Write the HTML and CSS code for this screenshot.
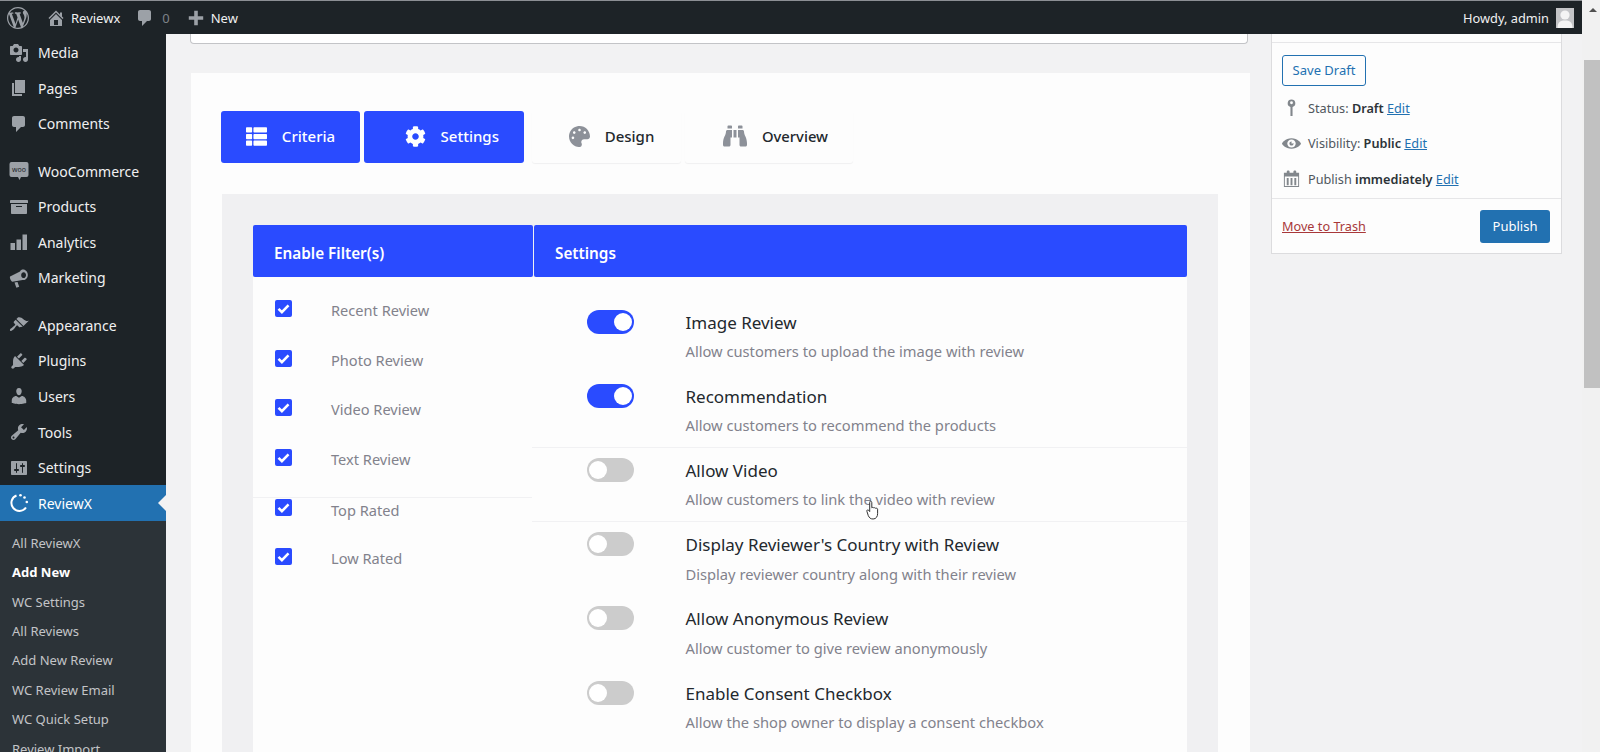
FILE: index.html
```html
<!DOCTYPE html>
<html lang="en">
<head>
<meta charset="utf-8">
<title>Add New ReviewX</title>
<link rel="stylesheet" href="styles.css">
</head>
<body>
<div class="page">
  <header class="adminbar">
    <svg class="ab-wp" viewBox="0 0 20 20"><path d="M20 10c0-5.51-4.49-10-10-10C4.48 0 0 4.49 0 10c0 5.52 4.48 10 10 10 5.51 0 10-4.48 10-10zM7.78 15.37L4.37 6.22c.55-.02 1.17-.08 1.17-.08.5-.06.44-1.13-.06-1.11 0 0-1.45.11-2.37.11-.18 0-.37 0-.58-.01C4.12 2.69 6.87 1.11 10 1.11c2.33 0 4.45.87 6.05 2.34-.68-.11-1.65.39-1.65 1.58 0 .74.45 1.36.9 2.1.35.61.55 1.36.55 2.46 0 1.49-1.4 5-1.4 5l-3.03-8.37c.54-.02.82-.17.82-.17.5-.05.44-1.25-.06-1.22 0 0-1.44.12-2.38.12-.87 0-2.33-.12-2.33-.12-.5-.03-.56 1.2-.06 1.22l.92.08 1.26 3.41zM17.41 10c.24-.64.74-1.87.43-4.25.7 1.29 1.05 2.71 1.05 4.25 0 3.29-1.73 6.24-4.4 7.78.97-2.59 1.94-5.2 2.92-7.78zM6.1 18.09C3.12 16.65 1.11 13.53 1.11 10c0-1.3.23-2.48.72-3.59C3.25 10.3 4.67 14.2 6.1 18.09zm4.03-6.63l2.58 6.98c-.86.29-1.76.45-2.71.45-.79 0-1.57-.11-2.29-.33.81-2.38 1.62-4.74 2.42-7.1z"/></svg>
    <svg class="ab-home" viewBox="0 0 20 20"><path d="M16 8.5l1.53 1.53-1.06 1.06L10 4.62l-6.47 6.47-1.06-1.06L10 2.5l4 4v-2h2v4zm-6-2.46l6 5.99V18H4v-5.97zM12 17v-5H8v5h4z"/></svg>
    <span class="ab-site">Reviewx</span>
    <svg class="ab-comment" viewBox="0 0 20 20"><path d="M5 2h9c1.1 0 2 .9 2 2v7c0 1.1-.9 2-2 2h-2l-5 5v-5H5c-1.1 0-2-.9-2-2V4c0-1.1.9-2 2-2z"/></svg>
    <span class="ab-count">0</span>
    <svg class="ab-plus" viewBox="0 0 20 20"><path d="M18 8v4h-6v6H8v-6H2V8h6V2h4v6z"/></svg>
    <span class="ab-new">New</span>
    <span class="ab-howdy">Howdy, admin</span>
    <span class="ab-avatar"><svg viewBox="0 0 18 20"><circle cx="9" cy="7" r="4.6"/><path d="M1.5 20c0-6 3-7.5 7.5-7.5s7.5 1.5 7.5 7.5z"/></svg></span>
  </header>

  <div class="body-row">
    <nav class="sidebar">
      <a class="menu-item"><svg viewBox="0 0 20 20"><path d="M13 11V4c0-.55-.45-1-1-1h-1.67L9 1H5L3.67 3H2c-.55 0-1 .45-1 1v7c0 .55.45 1 1 1h10c.55 0 1-.45 1-1zM7 4.5c1.38 0 2.5 1.12 2.5 2.5S8.38 9.5 7 9.5 4.5 8.38 4.5 7 5.62 4.5 7 4.5zM14 6h5v10.5c0 1.38-1.12 2.5-2.5 2.5S14 17.88 14 16.5s1.12-2.5 2.5-2.5c.17 0 .34.02.5.05V9h-3V6zm-4 8.05V13h2v3.5c0 1.38-1.12 2.5-2.5 2.5S7 17.88 7 16.5 8.12 14 9.5 14c.17 0 .34.02.5.05z"/></svg>Media</a>
      <a class="menu-item"><svg viewBox="0 0 20 20"><path d="M6 15V2h10v13H6zm-1 1h8v2H3V5h2v11z"/></svg>Pages</a>
      <a class="menu-item"><svg viewBox="0 0 20 20"><path d="M5 2h9c1.1 0 2 .9 2 2v7c0 1.1-.9 2-2 2h-2l-5 5v-5H5c-1.1 0-2-.9-2-2V4c0-1.1.9-2 2-2z"/></svg>Comments</a>
      <a class="menu-item menu-gap"><svg viewBox="0 0 20 20"><path d="M2.5 1h15a2 2 0 0 1 2 2v11a2 2 0 0 1-2 2H12l-1.5 3-1.5-3H2.5a2 2 0 0 1-2-2V3a2 2 0 0 1 2-2z"/><text class="woo-mark" x="10" y="11" text-anchor="middle">woo</text></svg>WooCommerce</a>
      <a class="menu-item"><svg viewBox="0 0 20 20"><path d="M19 4v2H1V4c0-.55.45-1 1-1h16c.55 0 1 .45 1 1zM2 7h16v9c0 .55-.45 1-1 1H3c-.55 0-1-.45-1-1V7zm11 3V9H7v1h6z"/></svg>Products</a>
      <a class="menu-item"><svg viewBox="0 0 20 20"><path d="M1.5 11H6v7H1.5zM7.5 7.5H12V18H7.5zM13.500 2.500H18V18h-4.500z"/></svg>Analytics</a>
      <a class="menu-item"><svg viewBox="0 0 20 20"><path fill-rule="evenodd" d="M1 8.5L11 3.5c1-2 3-2.500 5-1.500 2.500 1.300 3.500 4.300 2.500 7-.9 2.300-3 3.400-5 3L5 13.500l-1.500.2c-1.500-.5-3-3.500-2.500-5.200zM15 4.200c-1.500-.3-2.600.9-2.800 2.500-.2 1.700.7 3.200 2.100 3.400 1.400.2 2.500-1 2.700-2.600.2-1.600-.6-3-2-3.300z"/><path d="M5.500 14.500l3-.4 1.700 4.700-2.800.9z"/></svg>Marketing</a>
      <a class="menu-item menu-gap"><svg viewBox="0 0 20 20"><path d="M14.48 11.06L7.41 3.99l1.5-1.5c.5-.56 2.3-.47 3.51.32 1.21.8 1.43 1.28 2.91 2.1 1.18.64 2.45 1.26 4.45.85zm-.71.71L6.7 4.7 4.93 6.47c-.39.39-.39 1.02 0 1.41l1.06 1.06c.39.39.39 1.03 0 1.42-.6.6-1.43 1.11-2.21 1.69-.35.26-.7.53-1.01.84C1.43 13.23.4 14.84 1.19 15.63c.79.79 2.4-.24 3.74-1.58.31-.31.58-.66.84-1.01.58-.78 1.09-1.61 1.69-2.21.39-.39 1.03-.39 1.42 0l1.06 1.06c.39.39 1.02.39 1.41 0z"/></svg>Appearance</a>
      <a class="menu-item"><svg viewBox="0 0 20 20"><path d="M13.11 4.36L9.87 7.6 8 5.73l3.24-3.24c.35-.34 1.05-.2 1.56.32.52.51.66 1.21.31 1.55zm-8 1.77l.91-1.12 9.01 9.01-1.19.84c-.71.71-2.63 1.16-3.82 1.16H6.14L4.9 17.26c-.59.59-1.54.59-2.12 0-.59-.58-.59-1.53 0-2.12l1.24-1.24v-3.88c0-1.13.4-3.19 1.09-3.89zm7.26 3.97l3.24-3.24c.34-.35 1.04-.21 1.55.31.52.51.66 1.21.31 1.55l-3.24 3.25z"/></svg>Plugins</a>
      <a class="menu-item"><svg viewBox="0 0 20 20"><path d="M10 9.25c-2.27 0-2.73-3.44-2.73-3.44C7 4.02 7.82 2 9.97 2c2.16 0 2.98 2.02 2.71 3.81 0 0-.41 3.44-2.68 3.44zm0 2.57L12.72 10c2.39 0 4.52 2.33 4.52 4.53v2.49s-3.65 1.13-7.24 1.13c-3.65 0-7.24-1.13-7.24-1.13v-2.49c0-2.25 1.94-4.48 4.47-4.48z"/></svg>Users</a>
      <a class="menu-item"><svg viewBox="0 0 20 20"><path d="M16.68 9.77c-1.34 1.34-3.3 1.67-4.95.99l-5.41 6.52c-.99.99-2.59.99-3.58 0s-.99-2.59 0-3.57l6.52-5.42c-.68-1.65-.35-3.61.99-4.95 1.28-1.28 3.12-1.62 4.72-1.06l-2.89 2.89 2.82 2.82 2.86-2.87c.53 1.58.18 3.39-1.08 4.65zM3.81 16.21c.4.39 1.04.39 1.43 0 .4-.4.4-1.04 0-1.43-.39-.4-1.03-.4-1.43 0-.39.39-.39 1.03 0 1.43z"/></svg>Tools</a>
      <a class="menu-item"><svg viewBox="0 0 20 20"><path d="M18 16V4c0-.55-.45-1-1-1H3c-.55 0-1 .45-1 1v12c0 .55.45 1 1 1h14c.55 0 1-.45 1-1zM8 11h1c.55 0 1 .45 1 1s-.45 1-1 1H8v1.5c0 .28-.22.5-.5.5s-.5-.22-.5-.5V13H6c-.55 0-1-.45-1-1s.45-1 1-1h1V5.5c0-.28.22-.5.5-.5s.5.22.5.5V11zm5-2h-1c-.55 0-1-.45-1-1s.45-1 1-1h1V5.5c0-.28.22-.5.5-.5s.5.22.5.5V7h1c.55 0 1 .45 1 1s-.45 1-1 1h-1v5.5c0 .28-.22.5-.5.5s-.5-.22-.5-.5V9z"/></svg>Settings</a>
      <a class="menu-item menu-current"><svg class="rx-icon" viewBox="0 0 20 20"><path d="M7.5 2.5A8 8 0 1 0 17 14.5"/><circle cx="11.5" cy="2.2" r="1.3" class="rx-dot"/><circle cx="15.5" cy="4.5" r="1.3" class="rx-dot"/><circle cx="17.8" cy="9" r="1.3" class="rx-dot"/></svg>ReviewX</a>
      <div class="submenu">
        <a>All ReviewX</a>
        <a class="sub-current">Add New</a>
        <a>WC Settings</a>
        <a>All Reviews</a>
        <a>Add New Review</a>
        <a>WC Review Email</a>
        <a>WC Quick Setup</a>
        <a>Review Import</a>
      </div>
    </nav>

    <main class="content">
      <div class="col-main">
        <div class="box-stub"></div>
        <section class="panel">
          <div class="tabs">
            <a class="tab tab-1 tab-on"><svg viewBox="0 0 512 512"><path d="M149.333 216v80c0 13.255-10.745 24-24 24H24c-13.255 0-24-10.745-24-24v-80c0-13.255 10.745-24 24-24h101.333c13.255 0 24 10.745 24 24zM0 376v80c0 13.255 10.745 24 24 24h101.333c13.255 0 24-10.745 24-24v-80c0-13.255-10.745-24-24-24H24c-13.255 0-24 10.745-24 24zM125.333 32H24C10.745 32 0 42.745 0 56v80c0 13.255 10.745 24 24 24h101.333c13.255 0 24-10.745 24-24V56c0-13.255-10.745-24-24-24zm80 448H488c13.255 0 24-10.745 24-24v-80c0-13.255-10.745-24-24-24H205.333c-13.255 0-24 10.745-24 24v80c0 13.255 10.745 24 24 24zm-24-424v80c0 13.255 10.745 24 24 24H488c13.255 0 24-10.745 24-24V56c0-13.255-10.745-24-24-24H205.333c-13.255 0-24 10.745-24 24zm24 264H488c13.255 0 24-10.745 24-24v-80c0-13.255-10.745-24-24-24H205.333c-13.255 0-24 10.745-24 24v80c0 13.255 10.745 24 24 24z"/></svg>Criteria</a>
            <a class="tab tab-2 tab-on"><svg viewBox="0 0 512 512"><path d="M487.4 315.7l-42.6-24.6c4.3-23.2 4.3-47 0-70.2l42.6-24.6c4.9-2.8 7.1-8.6 5.5-14-11.1-35.6-30-67.8-54.7-94.6-3.8-4.1-10-5.1-14.8-2.3L380.8 110c-17.9-15.4-38.5-27.3-60.8-35.1V25.8c0-5.6-3.9-10.5-9.4-11.7-36.7-8.2-74.3-7.8-109.2 0-5.5 1.2-9.4 6.1-9.4 11.7V75c-22.2 7.9-42.8 19.8-60.8 35.1L88.7 85.5c-4.9-2.8-11-1.9-14.8 2.3-24.7 26.7-43.6 58.9-54.7 94.6-1.7 5.4.6 11.2 5.5 14L67.3 221c-4.3 23.2-4.3 47 0 70.2l-42.6 24.6c-4.9 2.8-7.1 8.6-5.5 14 11.1 35.6 30 67.8 54.7 94.6 3.8 4.1 10 5.1 14.8 2.3l42.6-24.6c17.9 15.4 38.5 27.3 60.8 35.1v49.2c0 5.6 3.9 10.5 9.4 11.7 36.7 8.2 74.3 7.8 109.2 0 5.5-1.2 9.4-6.1 9.4-11.7v-49.2c22.2-7.9 42.8-19.8 60.8-35.1l42.6 24.6c4.9 2.8 11 1.9 14.8-2.3 24.7-26.7 43.6-58.9 54.7-94.6 1.5-5.5-.7-11.3-5.6-14.1zM256 336c-44.1 0-80-35.9-80-80s35.9-80 80-80 80 35.9 80 80-35.9 80-80 80z"/></svg>Settings</a>
            <a class="tab tab-3"><svg viewBox="0 0 512 512"><path d="M204.3 5C104.9 24.4 24.8 104.3 5.2 203.4c-37 187 131.7 326.4 258.8 306.7 41.2-6.4 61.4-54.6 42.5-91.7-23.1-45.4 9.9-98.4 60.9-98.4h79.7c35.8 0 64.8-29.6 64.9-65.3C511.5 97.1 368.1-26.9 204.3 5zM96 320c-17.7 0-32-14.3-32-32s14.3-32 32-32 32 14.3 32 32-14.3 32-32 32zm32-128c-17.7 0-32-14.3-32-32s14.3-32 32-32 32 14.3 32 32-14.3 32-32 32zm128-64c-17.7 0-32-14.3-32-32s14.3-32 32-32 32 14.3 32 32-14.3 32-32 32zm128 64c-17.7 0-32-14.3-32-32s14.3-32 32-32 32 14.3 32 32-14.3 32-32 32z"/></svg>Design</a>
            <a class="tab tab-4"><svg viewBox="0 0 512 512"><path d="M416 48c0-8.84-7.16-16-16-16h-64c-8.84 0-16 7.16-16 16v48h96V48zM63.91 159.99C61.4 253.84 3.46 274.22 0 404v44c0 17.67 14.33 32 32 32h96c17.67 0 32-14.33 32-32V288h32V128H95.84c-17.63 0-31.45 14.37-31.93 31.99zm384.18 0c-.48-17.62-14.3-31.99-31.93-31.99H320v160h32v160c0 17.67 14.33 32 32 32h96c17.67 0 32-14.33 32-32v-44c-3.46-129.78-61.4-150.16-63.91-244.01zM176 32h-64c-8.84 0-16 7.16-16 16v48h96V48c0-8.84-7.16-16-16-16zm48 256h64V128h-64v160z"/></svg>Overview</a>
          </div>

          <div class="gray-panel">
            <div class="table-head">
              <div class="head-cell head-filter">Enable Filter(s)</div>
              <div class="head-cell head-settings">Settings</div>
            </div>
            <div class="table-body">
              <ul class="filters">
                <li class="filter"><span class="check"><svg viewBox="0 0 16 16"><path d="M3.3 8.3l3.2 3.2 6.2-6.4"/></svg></span><span class="filter-label">Recent Review</span></li>
                <li class="filter"><span class="check"><svg viewBox="0 0 16 16"><path d="M3.3 8.3l3.2 3.2 6.2-6.4"/></svg></span><span class="filter-label">Photo Review</span></li>
                <li class="filter"><span class="check"><svg viewBox="0 0 16 16"><path d="M3.3 8.3l3.2 3.2 6.2-6.4"/></svg></span><span class="filter-label">Video Review</span></li>
                <li class="filter"><span class="check"><svg viewBox="0 0 16 16"><path d="M3.3 8.3l3.2 3.2 6.2-6.4"/></svg></span><span class="filter-label">Text Review</span></li>
                <li class="filter filter-line"><span class="check"><svg viewBox="0 0 16 16"><path d="M3.3 8.3l3.2 3.2 6.2-6.4"/></svg></span><span class="filter-label">Top Rated</span></li>
                <li class="filter"><span class="check"><svg viewBox="0 0 16 16"><path d="M3.3 8.3l3.2 3.2 6.2-6.4"/></svg></span><span class="filter-label">Low Rated</span></li>
              </ul>
              <div class="settings">
                <div class="row"><span class="toggle toggle-on"></span><div class="row-text"><div class="row-title">Image Review</div><div class="row-desc">Allow customers to upload the image with review</div></div></div>
                <div class="row"><span class="toggle toggle-on"></span><div class="row-text"><div class="row-title">Recommendation</div><div class="row-desc">Allow customers to recommend the products</div></div></div>
                <div class="row row-line"><span class="toggle"></span><div class="row-text"><div class="row-title">Allow Video</div><div class="row-desc">Allow customers to link the video with review</div></div></div>
                <div class="row row-line"><span class="toggle"></span><div class="row-text"><div class="row-title">Display Reviewer's Country with Review</div><div class="row-desc">Display reviewer country along with their review</div></div></div>
                <div class="row"><span class="toggle"></span><div class="row-text"><div class="row-title">Allow Anonymous Review</div><div class="row-desc">Allow customer to give review anonymously</div></div></div>
                <div class="row"><span class="toggle"></span><div class="row-text"><div class="row-title">Enable Consent Checkbox</div><div class="row-desc">Allow the shop owner to display a consent checkbox</div></div></div>
              </div>
            </div>
          </div>
        </section>
      </div>

      <aside class="col-side">
        <div class="publish-box">
          <div class="pub-top">
            <a class="save-draft">Save Draft</a>
            <div class="pub-line"><svg class="pub-icon" viewBox="0 0 20 20"><path fill-rule="evenodd" d="M10 1.5a4 4 0 0 1 1.1 7.85V19H8.9V9.35A4 4 0 0 1 10 1.5zm0 2a1.500 1.500 0 1 0 0 3 1.500 1.500 0 0 0 0-3z"/></svg><span>Status: <b>Draft</b> <a class="edit">Edit</a></span></div>
            <div class="pub-line"><svg class="pub-icon" viewBox="0 0 20 20"><path d="M10 4.4C3.439 4.4 0 9.232 0 10c0 .766 3.439 5.6 10 5.6 6.56 0 10-4.834 10-5.6 0-.768-3.44-5.6-10-5.6zm0 9.907c-2.455 0-4.445-1.928-4.445-4.307S7.545 5.691 10 5.691s4.444 1.93 4.444 4.309-1.989 4.307-4.444 4.307zM10 10c-.407-.447.663-2.154 0-2.154-1.228 0-2.223.965-2.223 2.154s.995 2.154 2.223 2.154c1.227 0 2.223-.965 2.223-2.154 0-.547-1.877.379-2.223 0z"/></svg><span>Visibility: <b>Public</b> <a class="edit">Edit</a></span></div>
            <div class="pub-line"><svg class="pub-icon" viewBox="0 0 20 20"><path fill-rule="evenodd" d="M15 4h3v15H2V4h3V3c0-.41.15-.76.44-1.06.29-.29.65-.44 1.06-.44s.77.15 1.06.44c.29.3.44.65.44 1.06v1h4V3c0-.41.15-.76.44-1.06.29-.29.65-.44 1.06-.44s.77.15 1.06.44c.29.3.44.65.44 1.06v1zM3 8v10h14V8H3zm2 1.5h2V17H5V9.5zm4 0h2V17H9V9.5zm4 0h2V17h-2V9.5z"/></svg><span>Publish <b>immediately</b> <a class="edit">Edit</a></span></div>
          </div>
          <div class="pub-actions">
            <a class="trash">Move to Trash</a>
            <a class="publish-btn">Publish</a>
          </div>
        </div>
      </aside>
    </main>
  </div>
</div>

<div class="scrollbar"><span class="sb-arrow"></span><span class="sb-thumb"></span></div>

<svg class="cursor" viewBox="0 0 14 20"><path d="M4.5 1.2c.8 0 1.3.6 1.3 1.4v5.2c.3-.5 1.7-.6 2 .2.4-.5 1.7-.4 1.9.4.5-.4 1.8-.2 1.9.8v4.5c0 2.5-1.3 5.3-4.5 5.3-2.7 0-3.7-1.2-4.8-3.300L.9 11.300c-.5-1 .9-2 1.800-1l1 1.300V2.600c0-.8.1-1.400.8-1.400z"/></svg>
</body>
</html>
```

FILE: styles.css
```css
* { box-sizing: border-box; }
html, body { margin: 0; height: 752px; overflow: hidden; }
body {
  display: flex;
  width: 1600px;
  background: #f2f2f3;
  font-family: "Noto Sans", "Open Sans", sans-serif;
  font-size: 13px;
  color: #3c434a;
}
a { display: block; text-decoration: none; }
ul { margin: 0; padding: 0; list-style: none; }

.page { width: 1582px; display: flex; flex-direction: column; height: 752px; }

/* admin bar */
.adminbar {
  height: 34px;
  flex: none;
  border-top: 1px solid #8c8f94;
  background: #1d2327;
  color: #f0f0f1;
  display: flex;
  align-items: center;
  font-size: 13px;
  padding-left: 7px;
}
.adminbar svg { fill: #9ca1a7; flex: none; }
.ab-wp { width: 22px; height: 22px; margin-right: 17px; }
.ab-home { width: 20px; height: 20px; margin-right: 5px; }
.ab-site { margin-right: 15px; }
.ab-comment { width: 20px; height: 20px; margin-right: 7px; }
.ab-count { color: #7d8287; margin-right: 17px; }
.ab-plus { width: 18px; height: 18px; margin-right: 6px; }
.ab-howdy { margin-left: auto; margin-right: 7px; font-size: 12.8px; }
.ab-avatar {
  width: 18px; height: 20px;
  margin-right: 8px;
  background: #c3c4c7;
  display: flex;
  overflow: hidden;
}
.adminbar .ab-avatar svg { width: 18px; height: 20px; fill: #f4f4f4; }

.body-row { flex: 1; display: flex; min-height: 0; }

/* sidebar */
.sidebar {
  width: 166px;
  flex: none;
  background: #1d2327;
  padding-top: 0.8px;
  overflow: hidden;
}
.menu-item {
  height: 35.65px;
  display: flex;
  align-items: center;
  padding-left: 9px;
  color: #f0f0f1;
  font-size: 14px;
  position: relative;
}
.menu-item svg { width: 20px; height: 20px; margin-right: 9px; fill: #9ca1a7; flex: none; }
.menu-gap { margin-top: 11.5px; }
.woo-mark { font-size: 7px; font-family: "Noto Sans", sans-serif; fill: #1d2327; }
.menu-current { background: #2271b1; color: #fff; height: 36px; }
.menu-current::after {
  content: "";
  position: absolute;
  right: 0; top: 10px;
  border: 8px solid transparent;
  border-right-color: #f2f2f3;
}
.menu-item .rx-icon { fill: none; stroke: #fff; stroke-width: 2; }
.menu-item .rx-icon .rx-dot { fill: #fff; stroke: none; }

.submenu { background: #2c3338; padding-top: 7.4px; height: 240px; }
.submenu a {
  height: 29.4px;
  line-height: 29.4px;
  padding-left: 12px;
  font-size: 13px;
  color: #c3c4c7;
}
.submenu .sub-current { color: #fff; font-weight: 700; }

/* content */
.content { flex: 1; display: flex; min-width: 0; padding-left: 24px; overflow: hidden; }
.col-main { width: 1060px; flex: none; }
.box-stub {
  width: 1058px;
  height: 10px;
  background: #fff;
  border: 1px solid #c3c4c7;
  border-top: 0;
  border-radius: 0 0 4px 4px;
}
.panel {
  margin: 29px 0 0 1px;
  width: 1059px;
  height: 700px;
  background: #fdfdfd;
  padding: 38px 0 0 30px;
}

.tabs { display: flex; height: 52px; align-items: stretch; }
.tab {
  display: flex;
  align-items: center;
  justify-content: center;
  gap: 15px;
  font-size: 15px;
  font-weight: 500;
  color: #23282d;
  border-radius: 3px;
  margin-right: 3.5px;
  padding-bottom: 2px;
}
.tab svg { width: 21px; height: 21px; fill: #8d9199; flex: none; }
.tab-1 { width: 139px; }
.tab-2 { width: 160.5px; margin-right: 8px; padding-left: 16px; }
.tab-3 { width: 149px; padding-left: 10px; }
.tab-4 { width: 168px; padding-left: 14px; font-size: 14.8px; }
.tab-4 svg { width: 24px; height: 24px; }
.tab-3, .tab-4 { box-shadow: 0 1px 1px #f0f0f1; }
.tab-on { background: #2a4bff; color: #fff; }
.tab-on svg { fill: #fff; }

.gray-panel {
  width: 996px;
  height: 600px;
  margin: 31px 0 0 1px;
  background: #f0f0f2;
  padding: 31px 31px 0;
}
.table-head { display: flex; height: 52px; gap: 1.5px; }
.head-cell {
  background: #2a4bff;
  color: #fff;
  font-size: 15.3px;
  font-weight: 600;
  display: flex;
  align-items: center;
  padding: 3px 0 0 21px;
  border-radius: 2px;
}
.head-filter { width: 279.5px; }
.head-settings { flex: 1; }
.table-body { display: flex; background: #fdfdfd; height: 500px; padding-top: 21.6px; }

.filters { width: 279px; flex: none; }
.filter { height: 49.6px; display: flex; padding-left: 22px; }
.filter-line { border-top: 1px solid #f1f1f3; }
.check {
  width: 17px; height: 17px;
  margin-top: 1.4px;
  background: #2a4bff;
  border-radius: 2px;
  display: flex;
  flex: none;
}
.check svg { width: 17px; height: 17px; fill: none; stroke: #fff; stroke-width: 2.4; }
.filter-label {
  margin: -0.4px 0 0 39px;
  line-height: 24px;
  font-size: 14.6px;
  color: #82828c;
}

.settings { flex: 1; }
.row {
  height: 74.2px;
  display: flex;
  padding: 11px 0 0 55px;
  gap: 51.5px;
  border-top: 1px solid transparent;
}
.row-line { border-top-color: #f1f1f3; }
.toggle {
  width: 47px; height: 24px;
  margin-top: -1px;
  border-radius: 12px;
  background: #cccccc;
  position: relative;
  flex: none;
}
.toggle::after {
  content: "";
  position: absolute;
  top: 3px; left: 2px;
  width: 18px; height: 18px;
  border-radius: 50%;
  background: #fff;
}
.toggle-on { background: #2a4bff; }
.toggle-on::after { left: 27px; }
.row-title { font-size: 17px; line-height: 24px; color: #23282d; }
.row-desc { font-size: 14.7px; line-height: 24px; margin-top: 4.5px; color: #82828c; }

/* publish box */
.col-side { width: 291px; margin-left: 21px; flex: none; }
.publish-box {
  height: 220px;
  background: #fdfdfd;
  border: 1px solid #dcdcde;
  border-top: 0;
}
.pub-top {
  height: 165px;
  padding: 21px 10px 0;
  border-bottom: 1px solid #e6e6e8;
  background-image: linear-gradient(#e6e6e8, #e6e6e8);
  background-size: 100% 1px;
  background-position: 0 8px;
  background-repeat: no-repeat;
}
.save-draft {
  width: 84px; height: 30.5px;
  line-height: 28px;
  text-align: center;
  border: 1px solid #2271b1;
  border-radius: 3px;
  color: #2271b1;
  font-size: 13px;
  margin-bottom: 4.5px;
}
.pub-line { display: flex; align-items: center; height: 35.5px; font-size: 12.7px; color: #50575e; }
.pub-line b { color: #2c3338; font-weight: 600; }
.pub-icon { width: 19px; height: 19px; margin-right: 7px; fill: #82878c; flex: none; }
.edit { display: inline; color: #2271b1; text-decoration: underline; }
.pub-actions { display: flex; justify-content: space-between; align-items: center; padding: 11px 11px 0 10px; }
.trash { color: #a8383a; text-decoration: underline; font-size: 12.7px; margin-top: -2px; }
.publish-btn {
  width: 70px; height: 33px;
  line-height: 33px;
  text-align: center;
  background: #2271b1;
  color: #fff;
  border-radius: 3px;
  font-size: 13px;
}

/* scrollbar */
.scrollbar { width: 18px; flex: none; height: 752px; background: #f1f1f1; padding: 8px 0 0 2px; }
.sb-arrow {
  display: block;
  width: 0; height: 0;
  margin-left: 5px;
  border: 4px solid transparent;
  border-bottom: 4px solid #505050;
  border-top: 0;
}
.sb-thumb { display: block; width: 16px; height: 328px; margin-top: 48px; background: #c1c1c1; }

.cursor {
  position: absolute;
  left: 866px; top: 500px;
  width: 14px; height: 20px;
  fill: #fff;
  stroke: #333;
  stroke-width: 1;
}
```
